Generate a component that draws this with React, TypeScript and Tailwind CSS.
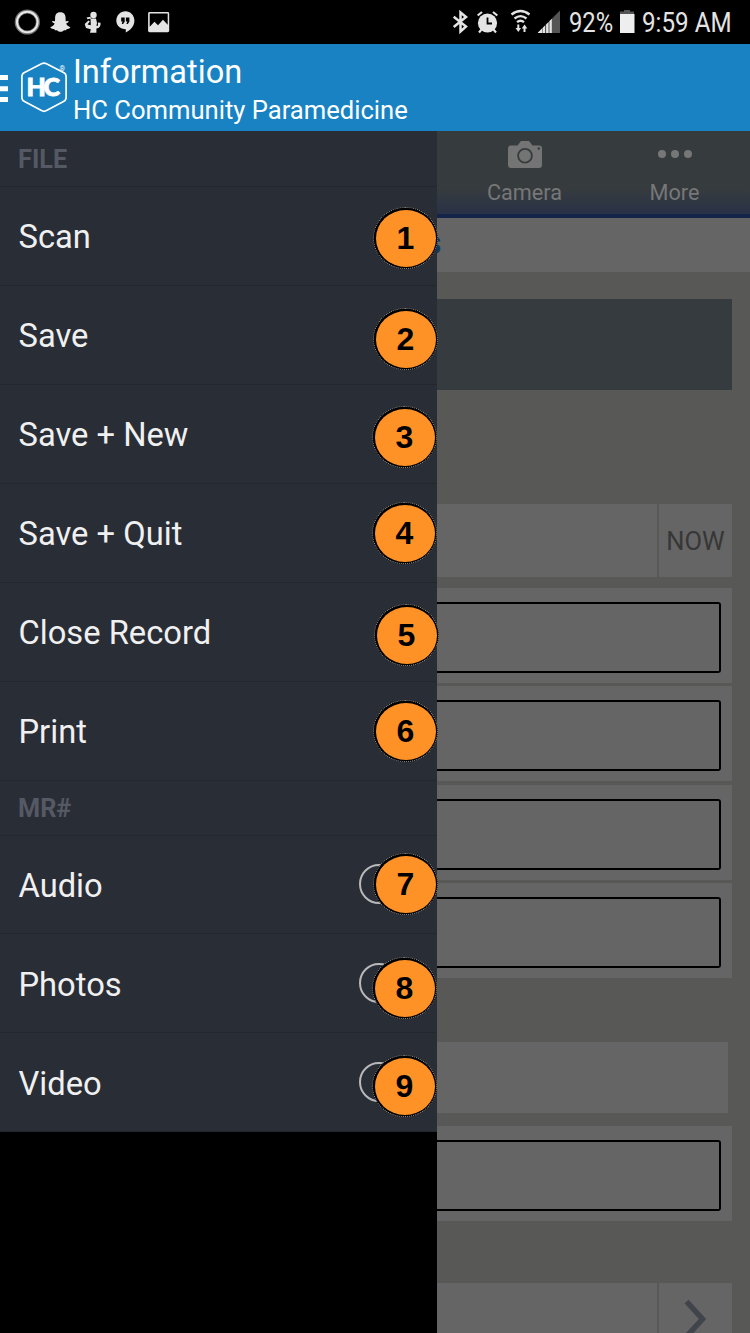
import React from "react";

type Item = { label: string; n: number; badge: string; toggle?: boolean };

const fileItems: Item[] = [
  { label: "Scan", n: 1, badge: "left-[373px] top-[20px]" },
  { label: "Save", n: 2, badge: "left-[373px] top-[22px]" },
  { label: "Save + New", n: 3, badge: "left-[372px] top-[21px]" },
  { label: "Save + Quit", n: 4, badge: "left-[372px] top-[18px]" },
  { label: "Close Record", n: 5, badge: "left-[374px] top-[21px]" },
  { label: "Print", n: 6, badge: "left-[373px] top-[18px]" },
];

const recordItems: Item[] = [
  { label: "Audio", n: 7, badge: "left-[373px] top-[18px]", toggle: true },
  { label: "Photos", n: 8, badge: "left-[372px] top-[23px]", toggle: true },
  { label: "Video", n: 9, badge: "left-[372px] top-[22px]", toggle: true },
];

function StatusBar() {
  return (
    <div className="flex h-[44px] items-center bg-black text-[#e4e4e4]">
      <svg className="h-[44px] w-[180px]" viewBox="0 0 180 44" fill="#e4e4e4">
        <circle cx="27.3" cy="22" r="10.6" fill="none" stroke="#777" strokeWidth="4" />
        <circle cx="27.3" cy="22" r="10.3" fill="none" stroke="#e8e8e8" strokeWidth="2" />
        <path d="M60.3 12.300c-4 0-5.300 2.700-5.200 6.200l-.1 2.700-3-.2c.3 1.600 1.500 2 2.600 2.400-.6 1.800-2.200 3-4.300 3.800.2 1.400 2.300 1.600 4 1.800l.5 1.300 2.200-.1c1.300 1 2.100 1.500 3.500 1.500s2.200-.5 3.500-1.500l2.200.1.500-1.300c1.700-.2 3.400-.4 3.700-1.800-2.100-.8-3.700-2-4.200-3.800 1.100-.4 2.200-.8 2.500-2.400l-3 .2-.1-2.700c.1-3.500-1.300-6.200-5.300-6.200z" />
        <circle cx="93.500" cy="15" r="3.200" />
        <path d="M90.500 18.500h5.500l1 4.500-.6 2.800h1.600l-.2-3.300 2.800.2c.2 3.500-1 5.300-4.200 5.800v4.200h-6.400l.8-3.500-4.800-1.200-1.300-4 3.700-3.500 1.500 1-2.400 3 3.300.7zM86.500 17.500l4-.8.500 1.700-3.500.8z" />
        <path fillRule="evenodd" d="M125.500 11.300c-5 0-9.200 4.200-9.200 9.300s4 8.700 9.500 8.700v3.200c4.500-2.200 8.600-6.500 8.600-12 0-5-4-9.200-8.900-9.200zM121.200 17.500h3.500v4.200l-1.600 2.300h-1.400l.9-2.500h-1.400zm4.700 0h3.500v4.200l-1.600 2.300h-1.400l.9-2.500h-1.400z" />
        <path fillRule="evenodd" d="M149.500 12h18.300q1.400 0 1.400 1.400v17.400q0 1.400-1.400 1.400h-18.300q-1.400 0-1.400-1.400v-17.400q0-1.400 1.400-1.400zM149.700 13.600v13.200l4.800-5 3.500 3.400 5-5.400 4.700 5v-11.200z" />
      </svg>
      <div className="grow" />
      <svg className="h-[44px] w-[118px]" viewBox="447 0 118 44" fill="#e4e4e4">
        <path d="M453.700 16.800l12.300 9.700-5.500 5v-19l5.500 4.500-12.300 10" fill="none" stroke="#e4e4e4" strokeWidth="2.500" />
        <circle cx="487.500" cy="23" r="9.600" />
        <path d="M477.700 15.500l4.300-3.500M493 12l4.300 3.500M481.500 29.500l-2.500 3M493.500 29.500l2.500 3" stroke="#e4e4e4" strokeWidth="2.200" />
        <path d="M487.500 17.500v6h4.500" fill="none" stroke="#000" strokeWidth="1.800" />
        <path d="M511.500 14.500q9-7 18 0M514.500 18.500q6-4.800 12 0M517 22.200q3.500-2.800 7 0" fill="none" stroke="#e4e4e4" strokeWidth="2.300" />
        <path d="M517.300 24.500h2v3.500h1.800l-2.800 4-2.800-4h1.800zM523.500 32v-3.500h-1.800l2.800-4 2.800 4h-1.800V32z" />
        <path d="M537.500 33L560 10.500V33z" fill="#555" />
        <path d="M538 32.500l4-4V33h-4zM542.600 27.900l2.400-2.400V33h-2.400zM546.100 24.400l2.400-2.400V33h-2.400zM549.500 21l2.300-2.300V33h-2.300z" />
      </svg>
      <span className="ml-[4px] w-[50px] pt-[2px] text-[27.500px] leading-[44px] whitespace-nowrap"><span className="inline-block origin-left scale-x-[0.865]">92%</span></span>
      <svg className="h-[44px] w-[17px]" viewBox="0 0 17 44">
        <path d="M5 10h6v1.500h4v3H1v-3h4z" fill="#555" /><path d="M1 14h14.500v19H1z" fill="#eee" />
      </svg>
      <span className="ml-[6px] w-[108px] pt-[2px] text-[27.500px] leading-[44px] whitespace-nowrap"><span className="inline-block origin-left scale-x-[0.88]">9:59 AM</span></span>
    </div>
  );
}

function AppBar() {
  return (
    <header className="flex h-[87px] bg-[#1882c3] text-white">
      <svg className="h-[87px] w-[73px]" viewBox="0 44 73 87">
        <path d="M0 75h8v5H0zM0 86.300h8v5H0zM0 97h8v5H0z" fill="#fff" />
        <path d="M41.500 63.800q2.500-1.400 5 0l17 8.600q2.600 1.300 2.600 4v21q0 2.700-2.600 4l-17 9.200q-2.500 1.400-5 0l-17-9.200q-2.600-1.300-2.600-4V76.400q0-2.700 2.600-4z" fill="none" stroke="#fff" strokeWidth="1.700" />
        <text x="26.500" y="96.300" fill="#fff" stroke="#fff" strokeWidth="0.800" fontFamily="Lato" fontWeight="900" fontSize="25" letterSpacing="-2.300">HC</text>
        <text x="59.500" y="71" fill="#fff" fontFamily="Roboto" fontSize="7">®</text>
      </svg>
      <div className="flex flex-col whitespace-nowrap">
        <h1 className="mt-[8px] text-[32.600px] leading-[40px]">Information</h1>
        <p className="mt-[2px] text-[25.600px] leading-[32px]">HC Community Paramedicine</p>
      </div>
    </header>
  );
}

function MenuRow({ item }: { item: Item }) {
  return (
    <li className="relative flex h-[99px] items-center border-b border-[#24272e] pl-[18.500px] text-[32.700px] text-[#f0f0f0]">
      <span className={item.toggle ? "pt-[6px]" : "pt-[4px]"}>{item.label}</span>
      {item.toggle && <span className="absolute top-[29px] left-[359px] h-[40px] w-[40px] rounded-full border-2 border-[#b8b8ba]" />}
      <span className={"absolute z-10 flex h-[62px] w-[65px] items-center justify-center rounded-[50%] border border-dotted border-[#999] bg-black p-[1.500px] " + item.badge}>
        <span className="flex h-full w-full items-center justify-center rounded-[50%] bg-[#ff9226] font-['Liberation_Sans',sans-serif] text-[32px] leading-none font-bold text-black">
          {item.n}
        </span>
      </span>
    </li>
  );
}

function SectionTitle({ children }: { children: React.ReactNode }) {
  return <h2 className="flex h-[56px] items-center border-b border-[#24272e] pt-[3px] pl-[18px] text-[25.300px] font-bold text-[#555963]">{children}</h2>;
}

function Drawer() {
  return (
    <nav className="relative z-10 w-[437px] shrink-0 bg-black">
      <div className="h-[1001px] bg-[#292d36]">
        <SectionTitle>FILE</SectionTitle>
        <ul>{fileItems.map((i) => <MenuRow key={i.n} item={i} />)}</ul>
        <div className="-mt-px"><SectionTitle>MR#</SectionTitle></div>
        <ul className="-mt-px">{recordItems.map((i) => <MenuRow key={i.n} item={i} />)}</ul>
      </div>
    </nav>
  );
}

function Field() {
  return (
    <div className="h-[95px] w-[295px] bg-[#656565] pt-[14px]">
      <div className="h-[71px] w-[284px] rounded-r-[3px] border-2 border-l-0 border-black" />
    </div>
  );
}

function SplitRow({ children }: { children: React.ReactNode }) {
  return (
    <div className="flex h-[73px] w-[295px] shrink-0 gap-[2px]">
      <div className="w-[220px] bg-[#656565]" />
      <div className="flex w-[73px] items-center justify-center bg-[#656565]">{children}</div>
    </div>
  );
}

function Page() {
  return (
    <main className="flex h-[1202px] w-[313px] flex-col bg-[#585856]">
      <div className="flex h-[87px] shrink-0 border-b-[4px] border-[#152449] bg-linear-to-b from-[#363b3e] from-70% to-[#293247] text-[#777]">
        <div className="flex w-[175px] flex-col items-center">
          <svg className="mt-[9px] h-[29px] w-[36px]" viewBox="0 0 36 29">
            <path d="M4 5.500h6.500L14 1h8l3.500 4.500H32q3 0 3 3V25q0 3-3 3H4q-3 0-3-3V8.500q0-3 3-3z" fill="#747474" />
            <circle cx="18" cy="15.800" r="6.900" fill="none" stroke="#363b3e" strokeWidth="1.800" /><circle cx="31.800" cy="8.500" r="1.200" fill="#363b3e" />
          </svg>
          <span className="mt-[8px] text-[21.700px] leading-[32px]">Camera</span>
        </div>
        <div className="flex w-[125px] flex-col items-center">
          <div className="mt-[19px] flex h-[8px] gap-[5px]">
            <i className="size-[8px] rounded-full bg-[#777]" /><i className="size-[8px] rounded-full bg-[#777]" /><i className="size-[8px] rounded-full bg-[#777]" />
          </div>
          <span className="mt-[19px] text-[21.700px] leading-[32px]">More</span>
        </div>
      </div>
      <div className="h-[54px] shrink-0 bg-[#656565]">
        <span className="-ml-[13px] block text-[34px] leading-[49px] font-bold text-[#0f3a63]">s</span>
      </div>
      <div className="mt-[27px] h-[91px] w-[295px] shrink-0 bg-[#363b3f]" />
      <div className="mt-[114px] flex shrink-0 flex-col"><SplitRow><span className="pt-[2px] text-[25.500px] text-[#373737]">NOW</span></SplitRow></div>
      <div className="mt-[11px] flex shrink-0 flex-col gap-[3.400px]"><Field /><Field /><Field /><Field /></div>
      <div className="mt-[64px] h-[71px] w-[291px] shrink-0 bg-[#656565]" />
      <div className="mt-[13px] shrink-0"><Field /></div>
      <div className="mt-[62px] shrink-0"><SplitRow>
        <svg className="h-[73px] w-[73px]" viewBox="0 0 73 73"><path d="M27.500 18.500l16 17.500-16 17.500" fill="none" stroke="#40444b" strokeWidth="5.500" /></svg>
      </SplitRow></div>
    </main>
  );
}

export default function App() {
  return (
    <div className="h-[1333px] w-[750px] overflow-hidden bg-black font-['Roboto',sans-serif]">
      <StatusBar />
      <AppBar />
      <div className="flex h-[1202px]">
        <Drawer />
        <Page />
      </div>
    </div>
  );
}
